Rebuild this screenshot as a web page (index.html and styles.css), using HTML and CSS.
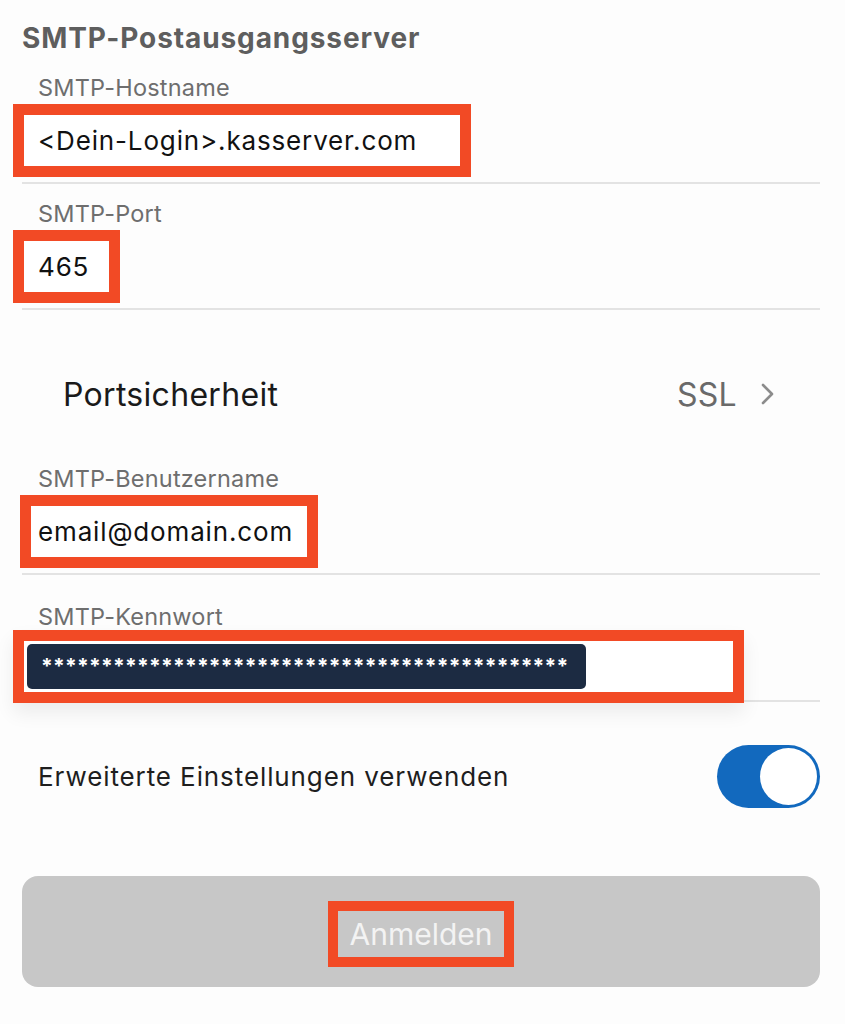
FILE: index.html
```html
<!DOCTYPE html>
<html lang="de">
<head>
  <meta charset="UTF-8">
  <title>SMTP-Postausgangsserver</title>
  <link rel="stylesheet" href="styles.css">
</head>
<body>
  <main class="page">
    <h1 class="title">SMTP-Postausgangsserver</h1>

    <div class="field field-first">
      <div class="label">SMTP-Hostname</div>
      <div class="mark mark-host">&lt;Dein-Login&gt;.kasserver.com</div>
    </div>

    <div class="field">
      <div class="label">SMTP-Port</div>
      <div class="mark mark-port">465</div>
    </div>

    <div class="row-select">
      <span class="row-title">Portsicherheit</span>
      <span class="row-value">SSL
        <svg class="chevron" width="14" height="22" viewBox="0 0 14 22"><polyline points="2,2 11,11 2,20" fill="none" stroke="#8c8c8c" stroke-width="2.6" stroke-linecap="round" stroke-linejoin="round"/></svg>
      </span>
    </div>

    <div class="field field-user">
      <div class="label">SMTP-Benutzername</div>
      <div class="mark mark-user">email@domain.com</div>
    </div>

    <div class="field field-pass">
      <div class="label">SMTP-Kennwort</div>
      <div class="mark mark-pass">
        <div class="secret">********************************************</div>
      </div>
    </div>

    <div class="row-toggle">
      <span class="toggle-label">Erweiterte Einstellungen verwenden</span>
      <div class="toggle"><div class="knob"></div></div>
    </div>

    <button class="login" type="button"><span class="login-mark">Anmelden</span></button>
  </main>
</body>
</html>
```

FILE: styles.css
```css
body {
  margin: 0;
  background: #fdfdfd;
  font-family: Inter, "Noto Sans", sans-serif;
  color: #111;
}
.page { padding: 18px 25px 0 22px; }
.title {
  margin: 0;
  font-size: 28px;
  line-height: 40px;
  font-weight: 700;
  letter-spacing: 0.9px;
  color: #5e5e5e;
}

/* fields */
.field { border-bottom: 2px solid #e3e3e3; padding-top: 16px; padding-bottom: 5px; }
.field-first { padding-top: 16px; }
.label {
  padding-left: 16px;
  font-size: 23.5px;
  line-height: 28px;
  letter-spacing: 0.2px;
  color: #6e6e6e;
}
.mark {
  box-sizing: border-box;
  height: 73px;
  margin-left: -9px;
  border: 11px solid #f24a25;
  background: #fff;
  display: flex;
  align-items: center;
  padding-left: 14px;
  font-size: 26px;
  letter-spacing: 0.85px;
  margin-top: 2px;
}
.mark-host { width: 458px; }
.mark-port { width: 107px; }
.mark-user { width: 298px; margin-left: -2px; padding-left: 7px; margin-top: 2px; }
.field-user { padding-top: 0; }
.field-pass { padding-top: 28px; padding-bottom: 0; }
.mark-pass {
  width: 731px;
  height: 73px;
  padding: 3px;
  margin-top: -1px;
  margin-bottom: -3px;
  position: relative;
  box-shadow: 0 10px 18px rgba(0,0,0,0.07);
}
.secret {
  width: 559px;
  height: 45px;
  box-sizing: border-box;
  background: #1c2b42;
  border-radius: 5px;
  color: #fff;
  font-weight: 700;
  font-size: 21px;
  line-height: 45px;
  padding-left: 14px;
  letter-spacing: 0.25px;
  overflow: hidden;
  white-space: nowrap;
}

/* select row */
.row-select {
  margin-top: 62px;
  height: 44px;
  padding: 0 45px 0 41px;
  display: flex;
  align-items: center;
  justify-content: space-between;
  font-size: 32px;
  letter-spacing: 0.3px;
  margin-bottom: 49px;
}
.row-title { color: #1a1a1a; }
.row-value { color: #6a6a6a; display: flex; align-items: center; gap: 24px; }

/* toggle row */
.row-toggle {
  margin-top: 43px;
  height: 63px;
  display: flex;
  align-items: center;
  justify-content: space-between;
  padding-left: 16px;
}
.toggle-label { font-size: 26px; letter-spacing: 0.9px; color: #1e1e1e; }
.toggle {
  width: 103px;
  height: 63px;
  box-sizing: border-box;
  border-radius: 32px;
  background: #1269be;
  padding: 3px;
  display: flex;
  justify-content: flex-end;
}
.knob { width: 57px; height: 57px; border-radius: 50%; background: #fff; }

/* button */
.login {
  display: flex;
  align-items: center;
  justify-content: center;
  width: 100%;
  height: 111px;
  margin-top: 68px;
  border: none;
  border-radius: 16px;
  background: #c7c7c7;
  font-family: inherit;
  padding: 0;
}
.login-mark {
  box-sizing: border-box;
  width: 186px;
  height: 66px;
  border: 10px solid #f24a25;
  display: flex;
  align-items: center;
  justify-content: center;
  color: #f3f3f3;
  font-size: 30px;
  margin-top: 5px;
}
```
